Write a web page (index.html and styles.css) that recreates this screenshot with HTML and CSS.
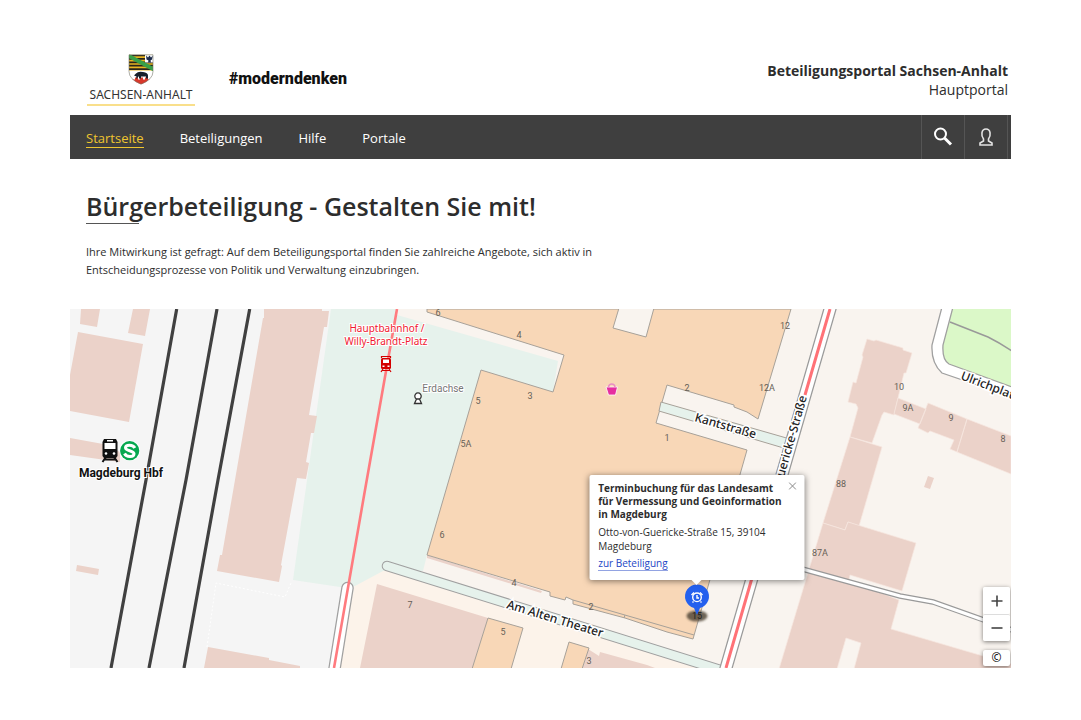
FILE: index.html
```html
<!DOCTYPE html>
<html lang="de">
<head>
<meta charset="utf-8">
<meta name="viewport" content="width=device-width, initial-scale=1">
<title>Beteiligungsportal Sachsen-Anhalt</title>
<link rel="stylesheet" href="styles.css">
</head>
<body>
<div class="page">
  <header class="header">
    <a class="brand" href="#">
      <svg class="crest" viewBox="0 0 26 30" aria-hidden="true">
        <clipPath id="shield"><path d="M1 0H25V17Q25 25 13 30Q1 25 1 17Z"/></clipPath>
        <g clip-path="url(#shield)">
          <path fill="#fff" d="M0 0H26V30H0Z"/>
          <path fill="#e8b422" d="M0 0H26V16H0Z"/>
          <path stroke="#29251b" stroke-width="1.7" d="M0 1H17M0 4.4H17M0 7.8H26M0 11.2H26M0 14.6H26"/>
          <path fill="#fff" d="M17 0H26V8H17Z"/>
          <path fill="#1d2b4c" d="M18 1L20 3L21.500 1L23 3L25 1L24 5L22.500 6L23 8H20L20.500 6L18.500 5Z"/>
          <path stroke="#38a048" stroke-width="4" d="M0 1L26 15"/>
          <path fill="#d8382b" d="M0 25H7V23H10V25H12V23H15V25H17V23H20V25H26V30H0Z"/>
          <path fill="#171f2b" d="M6 21L8 19Q10 16.500 15 17.500Q20 18 20 21V24H18V22H13V24H11V21.500L9 24H8L8.500 22Z"/>
        </g>
        <path fill="none" stroke="#77776c" stroke-width=".6" d="M1 .3H25V17Q25 25 13 29.700Q1 25 1 17Z"/>
      </svg>
      <span class="brand-name">SACHSEN-ANHALT</span>
    </a>
    <span class="slogan">#moderndenken</span>
    <div class="portal"><strong>Beteiligungsportal Sachsen-Anhalt</strong><span>Hauptportal</span></div>
  </header>

  <nav class="nav" aria-label="Hauptnavigation">
    <ul class="nav-list">
      <li><a class="active" href="#">Startseite</a></li>
      <li><a href="#">Beteiligungen</a></li>
      <li><a href="#">Hilfe</a></li>
      <li><a href="#">Portale</a></li>
    </ul>
    <div class="tools">
      <button type="button" aria-label="Suche">
        <svg width="20" height="20" viewBox="0 0 20 20" fill="none" stroke="#fff"><circle cx="7.500" cy="7" r="5.500" stroke-width="2"/><path d="M11.500 11L18 17.500" stroke-width="3"/></svg>
      </button>
      <button type="button" aria-label="Anmelden">
        <svg width="18" height="20" viewBox="0 0 18 20" fill="none" stroke="#e4e4e4" stroke-width="1.600"><path d="M6.500 12C4 9 4 2 9 2S14 9 11.500 12V14L15 16V18H3V16L6.500 14Z"/></svg>
      </button>
    </div>
  </nav>

  <main>
    <section class="intro">
      <h1>Bürgerbeteiligung - Gestalten Sie mit!</h1>
      <p>Ihre Mitwirkung ist gefragt: Auf dem Beteiligungsportal finden Sie zahlreiche Angebote, sich aktiv in Entscheidungsprozesse von Politik und Verwaltung einzubringen.</p>
    </section>

    <section class="map" aria-label="Karte">
      <svg class="map-canvas" viewBox="70 309 941 359">
        <path fill="#f9f4ef" d="M70 309H1011V668H70Z"/>
        <path fill="#f5f5f5" d="M70 309H345V668H70Z"/>
        <path fill="#fcf3ea" d="M336 668L355 586L388 566L722 668Z"/>
        <path fill="#e6f2ec" d="M331 309H397V315L558 361L553 392L481 370L427 555L423 571L383 571L355 586L340 587L293 580L307 480Z"/>
        <g fill="#ebd2c9">
          <path d="M81 309H100L97 327L80 324ZM133 309H150L145 336L128 333ZM78 332L143 344L129 422L70 411V375ZM70 438L103 444L120 452V462L70 455Z"/>
          <path d="M264 309H322V311H329L327 327H324L309 415L317 416L314 433H311L306 462L309 463L306 479L297 478L281 565L282 566L279 582L217 571L220 555H222L263 318H264Z"/>
          <path d="M77 565L99 569L98 575L76 571ZM208 647L269 658V660L300 666V668H204Z"/>
          <path d="M377 584L488 618L473 668H360ZM427 555L542 591L541 593L427 558ZM588 649L599 656L600 652L647 665L655 668H580Z"/>
          <path d="M928 476L934 478L930 489L924 487Z"/>
        </g>
        <g fill="#ebd2c9" stroke="#f6e7df" stroke-width=".7">
          <path d="M867 339L874 341L876 340L903 348V350L912 353L906 373H904L898 398L894 415L884 412L882 415L872 443L850 437L858 408L856 404L848 402L853 382L856 383L863 357L862 355Z"/>
          <path d="M898 398L926 409L920 424L894 414ZM928 403L967 419L957 452L950 449L954 440L930 431L928 433L918 428ZM967 419L1011 436V474L957 452ZM850 437L882 447L859 526L848 522L845 530L823 523Z"/>
          <path d="M823 523L845 530L848 522L916 543L902 591L850 575L849 580L899 600L891 629L983 656L1012 664V669H854L861 643L846 638L837 669H779Z"/>
        </g>
        <path fill="none" stroke="#fff" stroke-dasharray="2 2" d="M207 647L216 583L285 597L291 583"/>
        <path fill="none" stroke="#404040" stroke-width="3.200" d="M176.700 309L146 480L111 668M217 309L186 480L149 668M249.700 309L218 480L184 668"/>

        <g stroke="#a7a199" stroke-width="1">
          <path fill="#f8d7b7" d="M427 309V312L564 355L553 392L481 370L427 555L550 592V596L565 600L566 597L573 600V604L625 618L667 632L693 639L747 450L656 423L667 385L734 405V407L747 412L758 419L791 309Z"/>
          <path fill="#f9f4ef" d="M619 308L613 328L646 337L654 308"/>
          <path fill="none" d="M573 600L694 635M625 615L624 618"/>
          <path fill="#f8d7b7" d="M488 618L523 628L511 669H472ZM569 642L589 648L582 669H561Z"/>
        </g>
        <path fill="#e6f2ec" stroke="#a7a199" d="M661 402L790 439L787 449L659 411Z"/>

        <g fill="none" stroke-linecap="round">
          <path stroke="#a0a0a0" stroke-width="10.500" d="M387 566L730 673"/>
          <path stroke="#e6f2ec" stroke-width="8.500" d="M387 566L730 673"/>
          <path stroke="#a0a0a0" stroke-width="12.500" d="M347.500 588L334 672"/>
          <path stroke="#fff" stroke-width="10" d="M347.500 588L334 672"/>
        </g>
        <path fill="none" stroke="#ff7b7f" stroke-width="2.600" d="M397 309L365 490L334 668"/>
        <path stroke="#999" stroke-width="13" d="M832 302L724 675"/>
        <path stroke="#fff" stroke-width="10.500" d="M832 302L724 675"/>
        <path stroke="#ff7277" stroke-width="3" d="M830 309L805 395M752 578L726 668"/>

        <path fill="#fff" stroke="#a0a0a0" stroke-width="1.300" d="M942 307L932 345Q931 363 942 373L1012 397V306Z"/>
        <path fill="#dbf8c8" stroke="#a0a0a0" stroke-width="1.300" d="M953 307L943 345Q942 360 949 364L1012 387V307Z"/>
        <path fill="none" stroke="#999" stroke-width="1.500" d="M950 322L988 337Q1000 343 1012 351"/>
        <path fill="none" stroke="#999" stroke-width="5.500" d="M795 567L900 596L933 602L1012 630"/>
        <path fill="none" stroke="#fff" stroke-width="3.300" d="M795 567L900 596L933 602L1012 630"/>

        <g class="house-number">
          <text x="438" y="316">6</text><text x="519" y="338">4</text><text x="530" y="399">3</text><text x="478" y="404">5</text><text x="466" y="447">5A</text><text x="442" y="538">6</text><text x="410" y="608">7</text><text x="514" y="586">4</text><text x="503" y="635">5</text><text x="591" y="610">2</text><text x="589" y="664">3</text><text x="785" y="329">12</text><text x="767" y="391">12A</text><text x="687" y="391">2</text><text x="667" y="441">1</text><text x="899" y="390">10</text><text x="908" y="411">9A</text><text x="951" y="421">9</text><text x="1003" y="442">8</text><text x="841" y="487">88</text><text x="820" y="556">87A</text>
        </g>
        <g class="street">
          <text transform="translate(694 421) rotate(16)">Kantstraße</text>
          <text transform="translate(506 608) rotate(17)">Am Alten Theater</text>
          <text transform="translate(960 379) rotate(21)">Ulrichplatz</text>
          <text transform="translate(807 397) rotate(-74)" text-anchor="end">Otto-von-Guericke-Straße</text>
        </g>
        <g class="tram-stop"><text x="387" y="332">Hauptbahnhof /</text><text x="386" y="345">Willy-Brandt-Platz</text></g>
        <text class="landmark" x="443" y="392">Erdachse</text>
        <text class="station" x="121" y="477">Magdeburg Hbf</text>

        <g>
          <path fill="none" stroke="#d40000" stroke-width="1.200" d="M381.500 358V356.500H390.500V358M383 369L381 372M389 369L391 372M382 370.500H390"/>
          <rect x="381" y="358" width="10" height="11" rx="1.500" fill="#d40000"/>
          <path fill="#fff" d="M383 359.500H389V363H383ZM382.500 365.500H384.500V367H382.500ZM387.500 365.500H389.500V367H387.500Z"/>
        </g>
        <path fill="#fff" stroke="#333" stroke-width="1.300" d="M414.500 403.500L416.500 399A3.200 3.200 0 1 1 419.500 399L421.500 403.500ZM416.500 399H419.500"/>
        <g>
          <path fill="none" stroke="#111" stroke-width="2" d="M106 457L102.500 462M114 457L117.500 462M104 459.500H116"/>
          <path fill="#111" d="M104 439H116L117.500 442V456L116 458H104L102.500 456V442Z"/>
          <path fill="#fff" d="M107 440H113V441.500H107ZM104.500 443H115.500V449H104.500Z"/>
          <circle cx="106" cy="453.500" r="1.300" fill="#fff"/><circle cx="114" cy="453.500" r="1.300" fill="#fff"/>
          <circle cx="129.700" cy="450.700" r="10.500" fill="#fff"/><circle cx="129.700" cy="450.700" r="9.600" fill="#06a84f"/>
          <path fill="none" stroke="#fff" stroke-width="3" d="M134.800 448Q133.500 445.200 129.500 445.200Q125.500 445.200 125.500 447.700Q125.500 449.500 129.700 450.700Q134 452 134 453.800Q134 456.500 130 456.500Q126 456.500 124.500 453.500"/>
        </g>
        <path fill="#e62ea0" stroke="#fff" stroke-width=".8" d="M606 387H617.500L615.500 395H608.500Z"/>
        <path fill="none" stroke="#e98cc5" stroke-width="1.500" d="M608.500 387Q609 384 611.800 384T615 387"/>

        <defs><filter id="soft" x="-30%" y="-60%" width="160%" height="220%"><feGaussianBlur stdDeviation="1.200"/></filter></defs>
        <ellipse cx="697" cy="616" rx="10.500" ry="5.500" fill="#4b4032" opacity=".8" filter="url(#soft)"/>
        <text class="pin-number" x="697" y="619">15</text>
        <path fill="#2460ee" d="M697 615L694 608A12 12 0 1 1 700 608Z"/>
        <g fill="none" stroke="#fff" stroke-width="1.400"><circle cx="697" cy="597.300" r="4.300"/><path d="M697 595V598H699M691.500 595L694 592.500M702.500 595L700 592.500M693.500 601.500L692.500 602.500M700.500 601.500L701.500 602.500"/></g>
      </svg>

      <article class="popup">
        <h2>Terminbuchung für das Landesamt für Vermessung und Geoinformation in Magdeburg</h2>
        <p>Otto-von-Guericke-Straße 15, 39104 Magdeburg</p>
        <a href="#">zur Beteiligung</a>
        <button class="popup-close" type="button" aria-label="Schließen"><svg width="8" height="8" viewBox="0 0 8 8" stroke="#888"><path d="M.5 .5L7.500 7.500M7.500 .5L.5 7.500"/></svg></button>
      </article>

      <div class="map-controls">
        <div class="zoom">
          <button type="button" aria-label="Vergrößern"><svg width="12" height="12" viewBox="0 0 12 12" stroke="#444" stroke-width="1.600"><path d="M.5 6H11.500M6 .5V11.500"/></svg></button>
          <button type="button" aria-label="Verkleinern"><svg width="12" height="12" viewBox="0 0 12 12" stroke="#444" stroke-width="1.600"><path d="M.5 6H11.500"/></svg></button>
        </div>
        <button class="copyright" type="button" aria-label="Quellenangabe">©</button>
      </div>
    </section>
  </main>
</div>
</body>
</html>
```
FILE: styles.css
```css
* { box-sizing: border-box; }
body {
  margin: 0;
  background: #fff;
  color: #2d2d2d;
  font-family: "Open Sans", "Noto Sans", sans-serif;
}
button { padding: 0; border: 0; font: inherit; cursor: pointer; }
.page { padding: 48px 70px; }

.header {
  display: flex;
  align-items: flex-start;
  height: 67px;
  padding: 6px 3px 0 17px;
}
.brand {
  display: flex;
  flex-direction: column;
  align-items: center;
  min-width: 108px;
  border-bottom: 2px solid #f9df8b;
  color: #333;
  text-decoration: none;
}
.crest { width: 26px; height: 31px; }
.brand-name {
  font-family: "Noto Sans", sans-serif;
  font-size: 12px;
  line-height: 19px;
}
.slogan {
  margin: 15px 0 0 34px;
  color: #111;
  font-family: Roboto, sans-serif;
  font-size: 16px;
  font-weight: 900;
  line-height: 20px;
}
.portal {
  display: flex;
  flex-direction: column;
  margin: 7px 0 0 auto;
  font-size: 14px;
  line-height: 19px;
  text-align: right;
}

.nav {
  display: flex;
  justify-content: space-between;
  height: 44px;
  padding-right: 3px;
  background: #3f3f3f;
}
.nav-list {
  display: flex;
  align-items: center;
  gap: 36px;
  margin: 0;
  padding: 3px 0 0 16px;
  list-style: none;
}
.nav-list a {
  display: block;
  border-bottom: 1px solid transparent;
  color: #fff;
  font-size: 13px;
  line-height: 18px;
  text-decoration: none;
}
.nav-list a.active { border-color: #efc62f; color: #efc62f; }
.tools { display: flex; border-right: 1px solid #555; }
.tools button {
  display: grid;
  place-items: center;
  width: 43px;
  border-left: 1px solid #555;
  background: transparent;
}

.intro { padding: 30px 16px; }
.intro h1 {
  margin: 0 0 19px;
  font-size: 25px;
  font-weight: 600;
  line-height: 34px;
}
.intro h1::after {
  display: block;
  width: 53px;
  height: 1px;
  background: #555;
  content: "";
}
.intro p {
  max-width: 520px;
  margin: 0;
  font-size: 11px;
  line-height: 18px;
}

.map { position: relative; overflow: hidden; }
.map-canvas { display: block; width: 100%; height: auto; }
.map-canvas text { font-family: "Open Sans", sans-serif; paint-order: stroke; }
.map-canvas .house-number text,
.map-canvas .pin-number {
  fill: #665f57;
  font-family: Roboto, sans-serif;
  font-size: 9px;
  text-anchor: middle;
}
.map-canvas .pin-number { fill: #222; }
.map-canvas .street text {
  fill: #222;
  font-family: "Noto Sans", sans-serif;
  font-size: 12px;
  font-weight: 500;
  stroke: #fff;
  stroke-width: 3px;
}
.map-canvas .tram-stop text {
  fill: #f01830;
  font-family: "Noto Sans", sans-serif;
  font-size: 10px;
  stroke: #fff;
  stroke-width: 2px;
  text-anchor: middle;
}
.map-canvas .landmark {
  fill: #777;
  font-family: Roboto, sans-serif;
  font-size: 10px;
  stroke: #fff;
  stroke-width: 2px;
  text-anchor: middle;
}
.map-canvas .station {
  fill: #111;
  font-family: Roboto, sans-serif;
  font-size: 12px;
  font-weight: 700;
  stroke: #fff;
  stroke-width: 2px;
  text-anchor: middle;
}

.popup {
  position: absolute;
  bottom: 24.600%;
  left: 66.600%;
  width: 215px;
  padding: 7px 16px 9px 9px;
  border-radius: 2px;
  background: #fff;
  box-shadow: 0 1px 6px rgba(0, 0, 0, .5);
  transform: translateX(-50%);
  font-size: 10px;
}
.popup::after {
  position: absolute;
  top: 100%;
  left: 50%;
  border: 5px solid transparent;
  border-top-color: #fff;
  transform: translateX(-50%);
  content: "";
}
.popup h2 { margin: 0 0 4px; font-size: 10px; font-weight: 700; line-height: 13px; }
.popup p { margin: 0 0 3px; line-height: 14px; }
.popup a {
  display: inline-block;
  border-bottom: 1px dotted #2447c5;
  color: #2447c5;
  line-height: 13px;
  text-decoration: none;
}
.popup-close { position: absolute; top: 7px; right: 8px; display: flex; background: transparent; }

.map-controls {
  position: absolute;
  right: 1px;
  bottom: 2px;
  display: grid;
  gap: 9px;
  width: 27px;
}
.zoom { display: grid; border-radius: 2px; box-shadow: 0 1px 4px rgba(0, 0, 0, .5); }
.map-controls button {
  display: grid;
  place-items: center;
  height: 27px;
  border-radius: 2px;
  background: #fff;
}
.zoom button + button { border-top: 1px solid #ddd; }
.map-controls .copyright { height: 16px; box-shadow: 0 1px 4px rgba(0, 0, 0, .5); font-size: 12px; line-height: 16px; }
```
